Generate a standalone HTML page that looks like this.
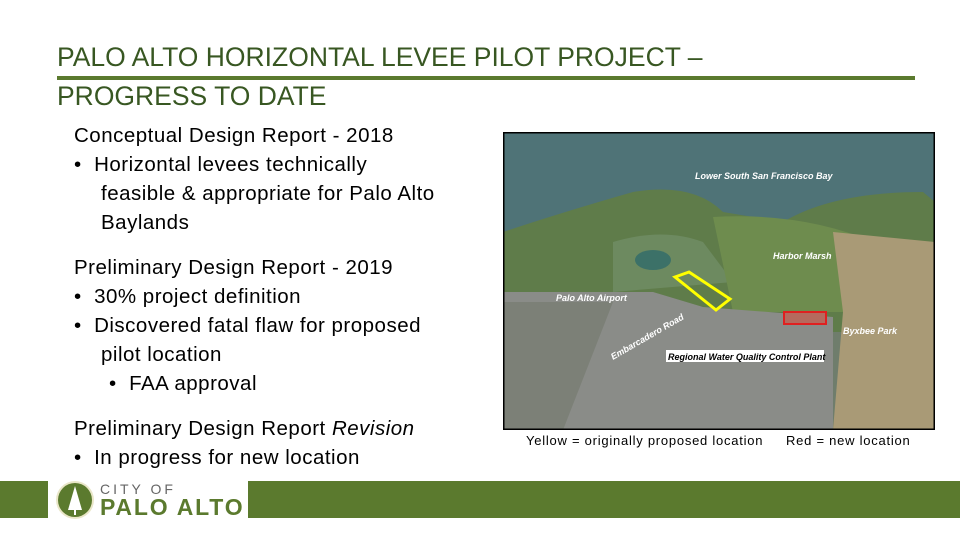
<!DOCTYPE html>
<html><head><style>
body{margin:0;width:960px;height:540px;background:#fff;position:relative;overflow:hidden;font-family:"Liberation Sans",sans-serif}
.t{position:absolute;left:57px;color:#385722;font-size:26.5px;line-height:30px}
.line{position:absolute;left:57px;top:76px;width:858px;height:4px;background:#5b7a2e}
.tx{position:absolute;left:74px;top:121px;font-size:20.5px;letter-spacing:0.5px;line-height:29px;color:#000;font-family:"Liberation Sans",sans-serif}
.tx p{margin:0;white-space:nowrap}
.cap{position:absolute;top:433px;font-size:13px;letter-spacing:0.75px;color:#000}
.bar{position:absolute;top:481px;height:37px;background:#5b7a2e}
</style></head><body>
<div class="t" style="top:42px">PALO ALTO HORIZONTAL LEVEE PILOT PROJECT –</div>
<div class="line"></div>
<div class="t" style="top:81px">PROGRESS TO DATE</div>
<div class="tx">
<p>Conceptual Design Report - 2018</p>
<p>•&nbsp; Horizontal levees technically</p>
<p style="padding-left:27px">feasible &amp; appropriate for Palo Alto</p>
<p style="padding-left:27px">Baylands</p>
<p style="margin-top:16px">Preliminary Design Report - 2019</p>
<p>•&nbsp; 30% project definition</p>
<p>•&nbsp; Discovered fatal flaw for proposed</p>
<p style="padding-left:27px">pilot location</p>
<p style="padding-left:35px">•&nbsp; FAA approval</p>
<p style="margin-top:16px">Preliminary Design Report <i>Revision</i></p>
<p>•&nbsp; In progress for new location</p>
</div>
<svg style="position:absolute;left:503px;top:132px" width="432" height="298" viewBox="0 0 432 298">
<rect width="432" height="298" fill="#6f7d6c"/>
<rect width="432" height="100" fill="#4f7377"/>
<path d="M0 100 Q60 80 130 60 Q190 50 220 80 L280 90 Q330 60 420 60 L432 70 L432 200 L0 200Z" fill="#5f7c4a"/>
<path d="M110 110 Q160 95 200 110 L230 150 L110 160Z" fill="#6d8a60"/>
<path d="M210 85 Q300 80 370 110 L370 180 L230 180Z" fill="#6e8c4e"/>
<path d="M330 100 L432 110 L432 298 L330 298 L340 180Z" fill="#a99a76"/>
<path d="M0 160 L150 160 L200 175 L330 185 L330 298 L0 298Z" fill="#8a8c88"/>
<path d="M0 170 L110 170 L60 298 L0 298Z" fill="#7c8077"/>
<ellipse cx="150" cy="128" rx="18" ry="10" fill="#3c7168"/>
<path d="M172 145 L186 140 L227 167 L213 178 Z" fill="none" stroke="#ffff00" stroke-width="3"/>
<rect x="281" y="180" width="42" height="12" fill="#b56a5e" stroke="#e02020" stroke-width="2"/>
<g font-family="Liberation Sans" font-style="italic" font-weight="bold" fill="#fff" font-size="9">
<text x="192" y="47">Lower South San Francisco Bay</text>
<text x="270" y="127">Harbor Marsh</text>
<text x="53" y="169">Palo Alto Airport</text>
<text x="340" y="202">Byxbee Park</text>
<text x="110" y="228" transform="rotate(-30 110 228)">Embarcadero Road</text>
</g>
<rect x="163" y="218" width="158" height="12" fill="#fff"/>
<text x="165" y="228" font-family="Liberation Sans" font-style="italic" font-weight="bold" font-size="9">Regional Water Quality Control Plant</text>
<rect x="0.5" y="0.5" width="431" height="297" fill="none" stroke="#000" stroke-width="2"/>
</svg>
<div class="cap" style="left:526px">Yellow = originally proposed location</div>
<div class="cap" style="left:786px">Red = new location</div>
<div class="bar" style="left:0;width:48px"></div>
<div class="bar" style="left:248px;width:712px"></div>
<svg style="position:absolute;left:55px;top:480px" width="40" height="40"><circle cx="20" cy="20" r="19" fill="#e9e6c8"/><circle cx="20" cy="20" r="17" fill="#5b7a2e"/><path d="M20 6 L27 30 L13 30Z" fill="#fff"/><rect x="19" y="29" width="2" height="6" fill="#fff"/></svg>
<div style="position:absolute;left:100px;top:481px;font-size:14px;letter-spacing:3px;color:#666">CITY OF</div>
<div style="position:absolute;left:100px;top:494px;font-size:23px;font-weight:bold;color:#5b7a2e;letter-spacing:1.8px">PALO ALTO</div>
</body></html>
